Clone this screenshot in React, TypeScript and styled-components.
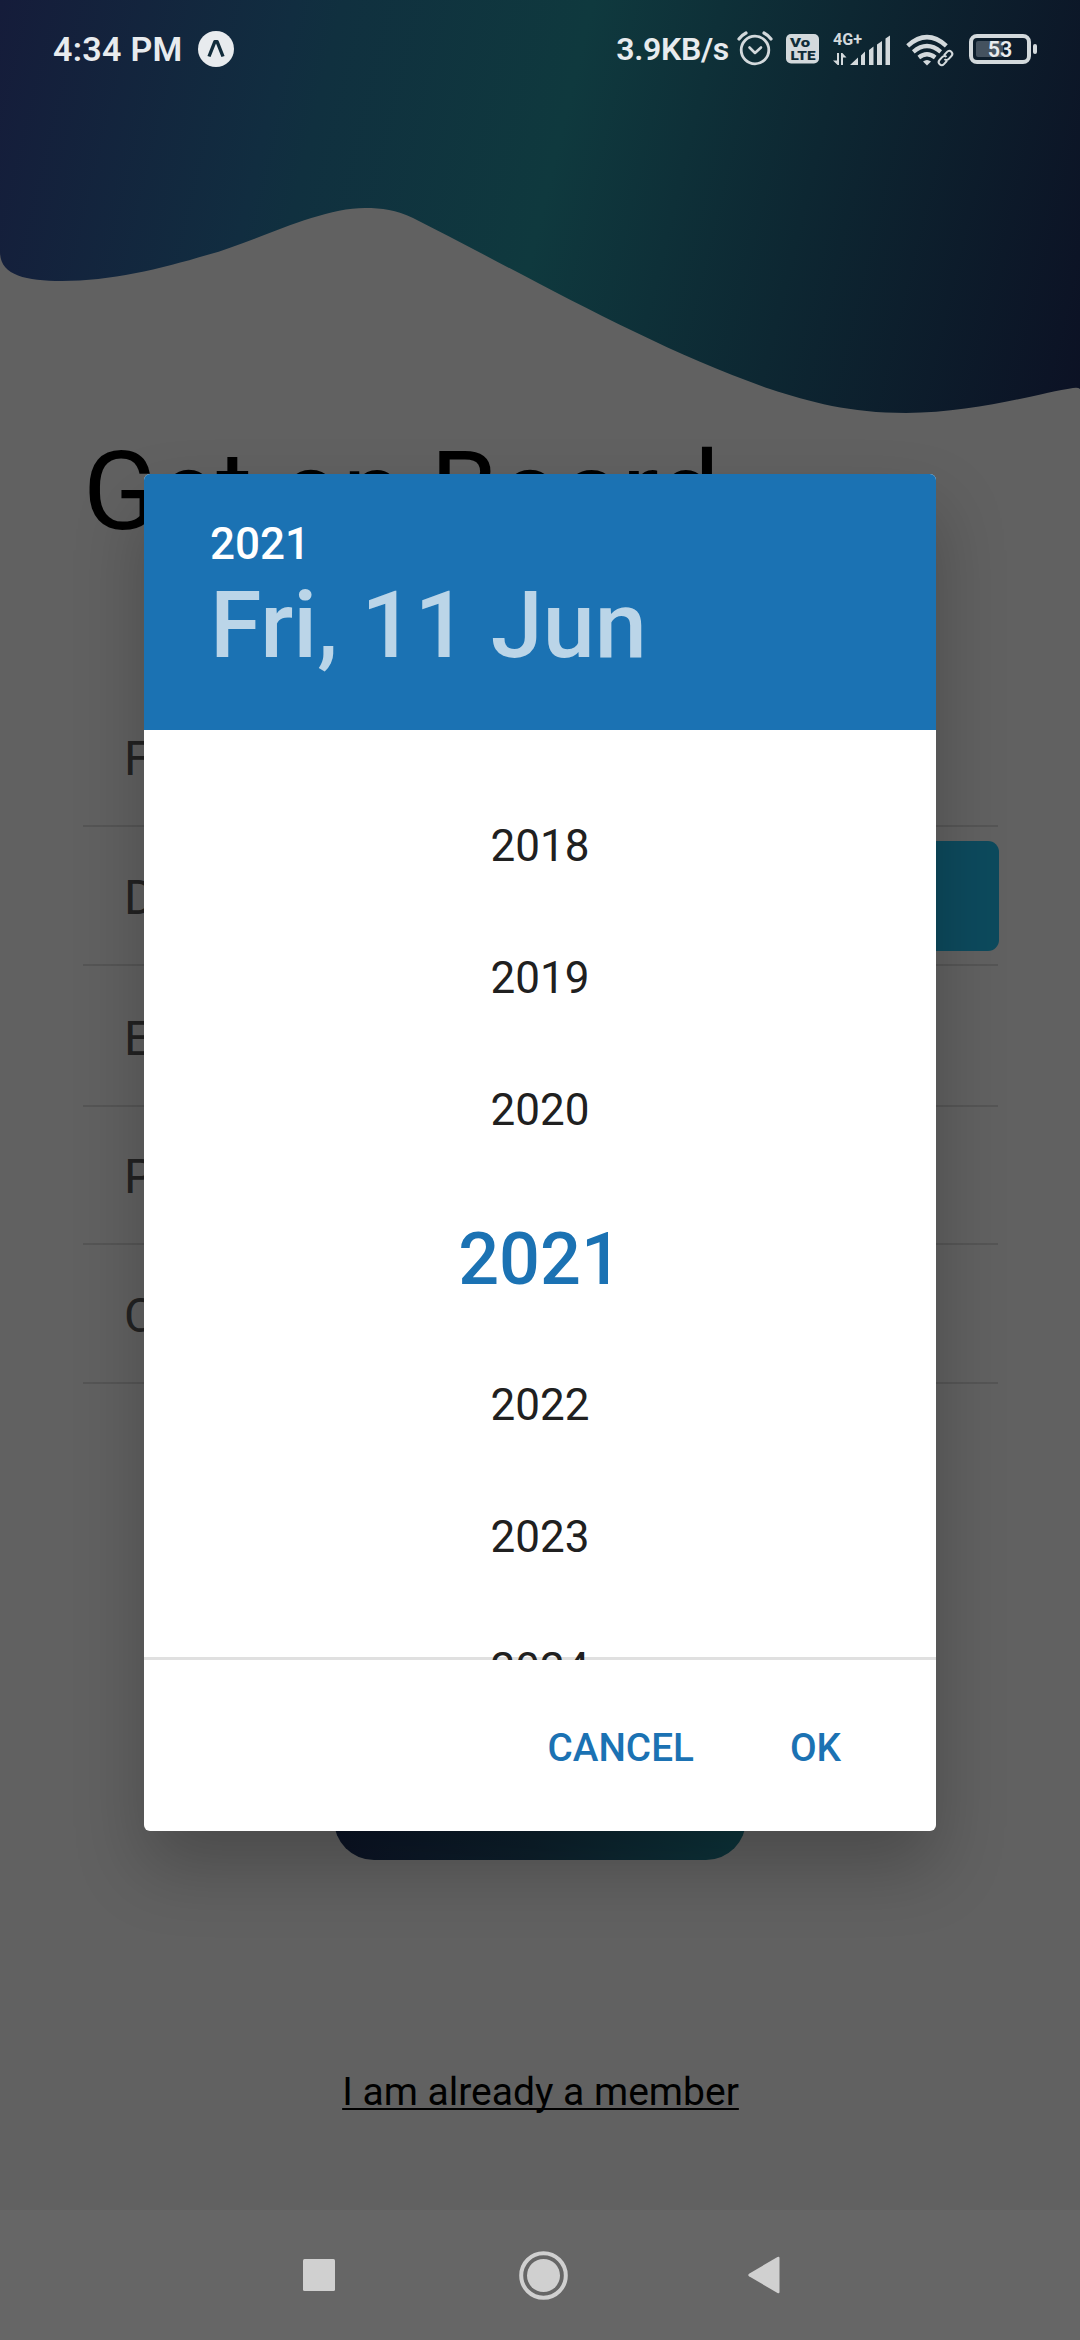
import React from "react";
import styled, { createGlobalStyle } from "styled-components";

const GlobalStyle = createGlobalStyle`
  * { box-sizing: border-box; }
  body {
    margin: 0;
    background: #616161;
    font-family: Roboto, "Noto Sans", sans-serif;
  }
  button { font: inherit; border: 0; background: none; padding: 0; margin: 0; }
`;

const Screen = styled.main`
  position: relative;
  display: flex;
  flex-direction: column;
  width: 1080px;
  height: 2340px;
  overflow: hidden;
  background: #616161;
`;

const WaveArt = styled.svg`
  position: absolute;
  top: 0;
  left: 0;
  width: 1080px;
  height: 420px;
`;

/* ---- status bar ---- */

const StatusBar = styled.header`
  position: relative;
  display: flex;
  align-items: center;
  justify-content: space-between;
  height: 98px;
  padding: 0 42px 0 53px;
  color: #e8ebee;
`;

const StatusGroup = styled.div`
  display: flex;
  align-items: center;
`;

const StatusText = styled.span<{ $size: number; $spacing?: number }>`
  font-size: ${(p) => p.$size}px;
  line-height: 40px;
  font-weight: 600;
  letter-spacing: ${(p) => p.$spacing ?? 0}px;
  white-space: nowrap;
`;

const StatusIcon = styled.svg<{ $gap: number }>`
  display: block;
  flex: none;
  overflow: visible;
  margin-left: ${(p) => p.$gap}px;
  color: #d3d9dc;
  font-family: Roboto, sans-serif;
`;

/* ---- sign-up page ---- */

const Title = styled.h1`
  margin: 329px 0 0 83px;
  font-size: 110px;
  line-height: 130px;
  font-weight: 400;
  color: #000;
  white-space: nowrap;
`;

const Form = styled.form`
  display: flex;
  flex-direction: column;
  width: 915px;
  margin: 131px 0 0 83px;
`;

const Field = styled.div<{ $height: number }>`
  display: flex;
  align-items: flex-end;
  justify-content: space-between;
  height: ${(p) => p.$height}px;
  border-bottom: 2px solid #555;
`;

const FieldLabel = styled.span`
  padding: 0 0 37px 41px;
  font-size: 48px;
  line-height: 58px;
  color: #222;
  white-space: nowrap;
`;

const DateButton = styled.button`
  width: 300px;
  height: 110px;
  margin: 0 -1px 13px 0;
  border-radius: 11px;
  background: #0d4a5d;
`;

const SubmitButton = styled.button`
  align-self: center;
  width: 412px;
  height: 120px;
  margin-top: 356px;
  border-radius: 40px;
  background: linear-gradient(100deg, #0b1224 0%, #0d202c 50%, #0d353c 100%);
`;

const MemberLink = styled.a`
  align-self: center;
  margin-top: 207px;
  padding-left: 1px;
  font-size: 39px;
  line-height: 50px;
  color: #000;
  text-decoration: underline;
  text-decoration-thickness: 2px;
  text-underline-offset: 3px;
  text-decoration-skip-ink: none;
`;

const NavBar = styled.nav`
  display: flex;
  align-items: center;
  height: 130px;
  margin-top: auto;
  padding-left: 303px;
  background: #666;
`;

const NavIcon = styled.svg<{ $gap: number }>`
  display: block;
  margin-left: ${(p) => p.$gap}px;
  fill: #d0d0d0;
`;

/* ---- date picker dialog ---- */

const Dialog = styled.section`
  position: absolute;
  top: 474px;
  left: 144px;
  display: flex;
  flex-direction: column;
  width: 792px;
  height: 1357px;
  border-radius: 6px;
  overflow: hidden;
  background: #fff;
  box-shadow: 0 36px 70px rgba(0, 0, 0, 0.23);
`;

const DialogHeader = styled.div`
  display: flex;
  flex-direction: column;
  align-items: flex-start;
  height: 256px;
  padding: 44px 0 0 66px;
  background: #1b72b3;
  color: #fff;
`;

const HeaderYear = styled.span`
  font-size: 44px;
  line-height: 52px;
  font-weight: 500;
`;

const HeaderDate = styled.span`
  font-size: 93.5px;
  line-height: 110px;
  font-weight: 500;
  color: #bbd5e8;
  white-space: nowrap;
`;

const YearList = styled.div`
  display: flex;
  flex-direction: column;
  flex: none;
  height: 930px;
  padding-top: 50px;
  overflow: hidden;
  background: linear-gradient(#e0e0e0, #e0e0e0) bottom / 100% 3px no-repeat;
`;

const YearItem = styled.div<{ $selected: boolean }>`
  flex: none;
  height: ${(p) => (p.$selected ? 163 : 132)}px;
  line-height: ${(p) => (p.$selected ? 167 : 132)}px;
  text-align: center;
  font-size: ${(p) => (p.$selected ? 72 : 44)}px;
  font-weight: ${(p) => (p.$selected ? 500 : 400)};
  color: ${(p) => (p.$selected ? "#1b72b3" : "#202020")};
`;

const DialogActions = styled.div`
  display: flex;
  justify-content: flex-end;
  gap: 96px;
  padding: 64px 95px 0 0;
`;

const ActionButton = styled.button`
  font-size: 38.7px;
  line-height: 48px;
  font-weight: 500;
  color: #1b72b3;
`;

const fields = [
  { label: "Full Name", height: 139 },
  { label: "Date of Birth", height: 139, picker: true },
  { label: "Email", height: 141 },
  { label: "Password", height: 138 },
  { label: "Confirm Password", height: 139 },
];

const years = [2018, 2019, 2020, 2021, 2022, 2023, 2024];
const selectedYear = 2021;

function Wave() {
  return (
    <WaveArt viewBox="0 0 1080 420">
      <defs>
        <linearGradient id="wave" gradientUnits="userSpaceOnUse" x1="0" y1="0" x2="1120" y2="270">
          <stop offset="0" stopColor="#151c3a" />
          <stop offset="0.25" stopColor="#112d40" />
          <stop offset="0.29" stopColor="#10303f" />
          <stop offset="0.5" stopColor="#0f393e" />
          <stop offset="0.72" stopColor="#0d2732" />
          <stop offset="1" stopColor="#0c1124" />
        </linearGradient>
      </defs>
      <path
        fill="url(#wave)"
        d="M0 0H1080V389Q1078 387 1073 388C1040 393 975 413 906 413C850 413 810 402 770 389C650 348 515 269 413 218C396 210 382 208 365 208C318 208 255 242 207 255C160 269 110 281 62 281C25 281 0 275 0 252Z"
      />
    </WaveArt>
  );
}

function Status() {
  return (
    <StatusBar>
      <StatusGroup>
        <StatusText $size={34} $spacing={0.3}>4:34 PM</StatusText>
        <StatusIcon $gap={15} width="36" height="36" viewBox="0 0 36 36">
          <circle cx="18" cy="18" r="18" fill="#e8ebee" />
          <path d="M11 25.5L16.8 10.8h2.4L25 25.5" fill="none" stroke="#122c3b" strokeWidth="3.4" strokeLinejoin="round" />
        </StatusIcon>
      </StatusGroup>
      <StatusGroup>
        <StatusText $size={32} $spacing={-0.3}>3.9KB/s</StatusText>
        <StatusIcon $gap={8} width="36" height="36" viewBox="0 0 36 36" fill="none" stroke="currentColor" strokeLinecap="round">
          <circle cx="18" cy="19" r="13.8" strokeWidth="2.8" />
          <path d="M12.5 16.5l5.5 5.5 6-5.5" strokeWidth="2.6" strokeLinejoin="round" />
          <path d="M2 8Q5 4 9 2M34 8Q31 4 27 2" strokeWidth="3.2" />
        </StatusIcon>
        <StatusIcon $gap={13} width="33" height="30" viewBox="0 0 33 30">
          <rect width="33" height="29.5" rx="5" fill="currentColor" />
          <text x="4" y="13.2" fontSize="13.5" fontWeight="900" fill="#0f2c37" textLength="20" lengthAdjust="spacingAndGlyphs">Vo</text>
          <text x="4.5" y="26" fontSize="13.5" fontWeight="900" fill="#0f2c37" textLength="25" lengthAdjust="spacingAndGlyphs">LTE</text>
        </StatusIcon>
        <StatusIcon $gap={14} width="58" height="34" viewBox="0 0 58 34" fill="currentColor">
          <text x="0" y="13" fontSize="16" fontWeight="700" textLength="29" lengthAdjust="spacingAndGlyphs">4G+</text>
          <path d="M4 21h2v12H4.6L0 28.5h4zM8 21h1.4L13.5 25.5H10V33H8z" />
          <path d="M17 33l8-7.5V33zM28 23.5l4-4V33h-4zM36 18l4.5-3.5V33H36zM44 12.5l5-3.5V33h-5zM52.5 6.5l4.5-3V33h-4.5z" />
        </StatusIcon>
        <StatusIcon $gap={15} width="48" height="34" viewBox="0 0 48 34" fill="none" stroke="currentColor">
          <path d="M1.7 13.8Q21 -3.5 40.3 13.8" strokeWidth="4.4" />
          <path d="M7.3 19.8Q21 8.2 34.7 19.8" strokeWidth="4.2" />
          <path d="M12.8 25.5Q21 19 29.2 25.5" strokeWidth="4.2" />
          <path d="M17 29.5Q21 26.5 25 29.5L21 33.5z" fill="currentColor" stroke="none" />
          <g transform="translate(39.5 26) rotate(-47)" strokeWidth="2">
            <path d="M-1 3H-5.5A3 3 0 0 1-5.5-3H-1A3 3 0 0 1 1.5 0M1-3H5.5A3 3 0 0 1 5.5 3H1A3 3 0 0 1-1.5 0" />
          </g>
        </StatusIcon>
        <StatusIcon $gap={15} width="69" height="30" viewBox="0 0 69 30">
          <rect x="2" y="2" width="58" height="26" rx="6" fill="none" stroke="currentColor" strokeWidth="4" />
          <rect x="7" y="7" width="27" height="16" rx="2" fill="#44525f" />
          <rect x="64" y="10" width="4" height="10" rx="2" fill="currentColor" />
          <text x="31" y="22.5" fontSize="21.5" fontWeight="600" fill="#e8ebee" textAnchor="middle">53</text>
        </StatusIcon>
      </StatusGroup>
    </StatusBar>
  );
}

function DatePicker() {
  return (
    <Dialog role="dialog">
      <DialogHeader>
        <HeaderYear>2021</HeaderYear>
        <HeaderDate>Fri, 11 Jun</HeaderDate>
      </DialogHeader>
      <YearList>
        {years.map((year) => (
          <YearItem key={year} $selected={year === selectedYear}>
            {year}
          </YearItem>
        ))}
      </YearList>
      <DialogActions>
        <ActionButton>CANCEL</ActionButton>
        <ActionButton>OK</ActionButton>
      </DialogActions>
    </Dialog>
  );
}

export default function App() {
  return (
    <>
      <GlobalStyle />
      <Screen>
        <Wave />
        <Status />
        <Title>Get on Board</Title>
        <Form>
          {fields.map((field) => (
            <Field key={field.label} $height={field.height}>
              <FieldLabel>{field.label}</FieldLabel>
              {field.picker && <DateButton type="button" aria-label="Pick a date" />}
            </Field>
          ))}
        </Form>
        <SubmitButton aria-label="Sign up" />
        <MemberLink>I am already a member</MemberLink>
        <NavBar>
          <NavIcon $gap={0} width="32" height="32" viewBox="0 0 32 32">
            <rect width="32" height="32" rx="1.5" />
          </NavIcon>
          <NavIcon $gap={184} width="49" height="49" viewBox="0 0 49 49">
            <circle cx="24.5" cy="24.5" r="22.3" fill="none" stroke="#d0d0d0" strokeWidth="4" />
            <circle cx="24.5" cy="24.5" r="16.5" />
          </NavIcon>
          <NavIcon $gap={180} width="32" height="38" viewBox="0 0 32 38">
            <path d="M1 17.7L29.5 1Q31.5 0.2 31.5 2V36Q31.5 37.8 29.5 37L1 20.3Q-0.5 19 1 17.7z" />
          </NavIcon>
        </NavBar>
        <DatePicker />
      </Screen>
    </>
  );
}
